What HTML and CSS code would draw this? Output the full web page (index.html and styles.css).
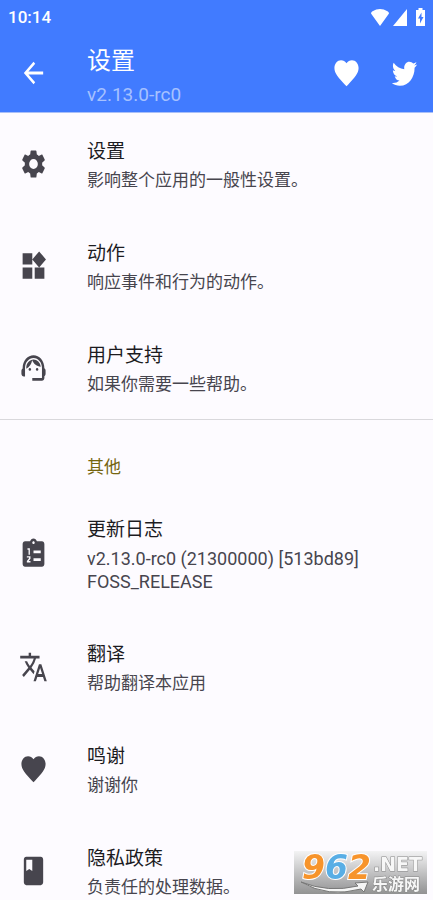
FILE: index.html
```html
<!DOCTYPE html>
<html lang="zh-CN">
<head>
<meta charset="utf-8">
<meta name="viewport" content="width=device-width, initial-scale=1">
<title>设置</title>
<link rel="stylesheet" href="styles.css">
</head>
<body>
<header class="header">
  <div class="status">
    <span>10:14</span>
    <span class="status-icons">
      <svg class="wifi" viewBox="0 0 18 17" aria-hidden="true"><path d="M9 17 0 4.500Q0 3 1.500 2.200 9-2 16.500 2.200 18 3 18 4.500Z"/></svg>
      <svg class="signal" viewBox="0 0 14 17" aria-hidden="true"><path d="M14 0v17H0z"/></svg>
      <svg class="battery" viewBox="0 0 9 18" aria-hidden="true"><path fill-rule="evenodd" d="M2.500 0h4v2H9v16H0V2h2.500zM5.500 4.500 2 10.500h2v5l3.500-6.500h-2z"/></svg>
    </span>
  </div>
  <div class="toolbar">
    <button class="icon-button" type="button" aria-label="返回"><svg class="icon" viewBox="0 0 24 24" preserveAspectRatio="none"><path d="M20 11H7.830l5.590-5.590L12 4l-8 8 8 8 1.410-1.410L7.830 13H20z"/></svg></button>
    <div class="heading">
      <h1 class="page-title">设置</h1>
      <p class="page-version">v2.13.0-rc0</p>
    </div>
    <button class="icon-button" type="button" aria-label="捐赠"><svg class="icon" viewBox="0 0 24 24" preserveAspectRatio="none"><path d="m12 21.350-1.450-1.320C5.400 15.360 2 12.280 2 8.500 2 5.420 4.420 3 7.500 3c1.740 0 3.410.81 4.500 2.090C13.090 3.810 14.760 3 16.500 3 19.580 3 22 5.420 22 8.500c0 3.780-3.400 6.860-8.550 11.540z"/></svg></button>
    <button class="icon-button" type="button" aria-label="Twitter"><svg class="icon" viewBox="0 0 24 24" preserveAspectRatio="none"><path d="M22.460 6c-.77.35-1.600.58-2.460.69.88-.53 1.560-1.370 1.880-2.380-.83.5-1.750.85-2.720 1.050C18.370 4.500 17.260 4 16 4c-2.350 0-4.270 1.920-4.270 4.290 0 .34.040.67.110.98C8.280 9.090 5.110 7.380 3 4.790c-.37.63-.58 1.370-.58 2.150 0 1.490.75 2.810 1.910 3.560-.71 0-1.370-.2-1.950-.5v.03c0 2.080 1.480 3.820 3.440 4.210a4.220 4.220 0 0 1-1.930.07 4.280 4.280 0 0 0 4 2.980 8.521 8.521 0 0 1-5.330 1.840c-.34 0-.68-.02-1.020-.06C3.440 20.290 5.700 21 8.120 21 16 21 20.330 14.460 20.330 8.790c0-.19 0-.37-.01-.56.84-.6 1.560-1.360 2.140-2.230z"/></svg></button>
  </div>
</header>
<main class="content">
  <section class="group">
    <a class="row" href="#general">
      <svg class="icon" viewBox="0 0 24 24" preserveAspectRatio="none" aria-hidden="true"><path d="M19.140 12.940c.04-.3.060-.61.060-.94 0-.32-.02-.64-.07-.94l2.030-1.580c.18-.14.23-.41.120-.61l-1.920-3.320c-.12-.22-.37-.29-.59-.22l-2.390.96c-.5-.38-1.030-.7-1.620-.94l-.36-2.540c-.04-.24-.24-.41-.48-.41h-3.840c-.24 0-.43.17-.47.41l-.36 2.540c-.59.24-1.130.57-1.620.94l-2.390-.96c-.22-.08-.47 0-.59.22L2.740 8.870c-.12.21-.08.47.120.61l2.030 1.580c-.05.3-.09.63-.09.94s.02.64.07.94l-2.030 1.580c-.18.14-.23.41-.12.61l1.920 3.320c.12.22.37.29.59.22l2.390-.96c.5.38 1.030.7 1.620.94l.36 2.540c.05.24.24.41.48.41h3.840c.24 0 .44-.17.47-.41l.36-2.540c.59-.24 1.130-.56 1.620-.94l2.390.96c.22.08.47 0 .59-.22l1.920-3.320c.12-.22.07-.47-.12-.61zM12 15.600A3.600 3.600 0 1 1 12 8.400a3.600 3.600 0 0 1 0 7.200z"/></svg>
      <div class="text"><h2 class="title">设置</h2><p class="summary">影响整个应用的一般性设置。</p></div>
    </a>
    <a class="row" href="#actions">
      <svg class="icon" viewBox="0 0 24 24" preserveAspectRatio="none" aria-hidden="true"><path d="M13 13v8h8v-8zM3 21h8v-8H3zM3 3v8h8V3zm13.660-1.310L11 7.340 16.660 13l5.660-5.660z"/></svg>
      <div class="text"><h2 class="title">动作</h2><p class="summary">响应事件和行为的动作。</p></div>
    </a>
    <a class="row" href="#support">
      <svg class="icon" viewBox="0 0 24 24" preserveAspectRatio="none" aria-hidden="true"><path d="M21 12.220C21 6.730 16.740 3 12 3c-4.690 0-9 3.650-9 9.280-.6.34-1 .98-1 1.720v2c0 1.100.9 2 2 2h1v-6.100C5 8.030 8.130 4.900 12 4.900s7 3.130 7 7V19h-8v2h8c1.100 0 2-.9 2-2v-1.220c.59-.31 1-.92 1-1.640v-2.300c0-.7-.41-1.310-1-1.620z"/><circle cx="9" cy="13" r="1"/><circle cx="15" cy="13" r="1"/><path d="M18 11.030A6.040 6.040 0 0 0 12.050 6c-3.030 0-6.290 2.510-6.030 6.450a8.075 8.075 0 0 0 4.860-5.890c1.310 2.630 4 4.440 7.120 4.470z"/></svg>
      <div class="text"><h2 class="title">用户支持</h2><p class="summary">如果你需要一些帮助。</p></div>
    </a>
  </section>
  <section class="group">
    <h2 class="category">其他</h2>
    <a class="row" href="#changelog">
      <svg class="icon" viewBox="0 0 24 24" preserveAspectRatio="none" aria-hidden="true"><path d="M19 3h-4.180C14.400 1.840 13.300 1 12 1s-2.400.84-2.820 2H5c-1.100 0-2 .9-2 2v14c0 1.100.9 2 2 2h14c1.100 0 2-.9 2-2V5c0-1.100-.9-2-2-2zm-7 0c.55 0 1 .45 1 1s-.45 1-1 1-1-.45-1-1 .45-1 1-1z"/><path class="mark" d="M7 8h2v4.500H7.900V9H7zM6.500 13.500h3v1.800L8 17h1.500v1h-3v-1l1.800-2v-.5H6.500zM12 9.500h6v2h-6zM12 15h6v2h-6z"/></svg>
      <div class="text"><h2 class="title">更新日志</h2><p class="summary latin">v2.13.0-rc0 (21300000) [513bd89]<br>FOSS_RELEASE</p></div>
    </a>
    <a class="row" href="#translate">
      <svg class="icon" viewBox="0 0 24 24" preserveAspectRatio="none" aria-hidden="true"><path d="m12.870 15.070-2.540-2.510.03-.03A17.520 17.520 0 0 0 14.070 6H17V4h-7V2H8v2H1v1.990h11.170C11.500 7.920 10.440 9.750 9 11.350 8.070 10.320 7.300 9.190 6.690 8h-2c.73 1.630 1.730 3.170 2.980 4.560l-5.090 5.020L4 19l5-5 3.110 3.110zM18.500 10h-2L12 22h2l1.120-3h4.750L21 22h2zm-2.620 7 1.620-4.330L19.120 17z"/></svg>
      <div class="text"><h2 class="title">翻译</h2><p class="summary">帮助翻译本应用</p></div>
    </a>
    <a class="row" href="#thanks">
      <svg class="icon" viewBox="0 0 24 24" preserveAspectRatio="none" aria-hidden="true"><path d="m12 21.350-1.450-1.320C5.400 15.360 2 12.280 2 8.500 2 5.420 4.420 3 7.500 3c1.740 0 3.410.81 4.500 2.090C13.090 3.810 14.760 3 16.500 3 19.580 3 22 5.420 22 8.500c0 3.780-3.400 6.860-8.550 11.540z"/></svg>
      <div class="text"><h2 class="title">鸣谢</h2><p class="summary">谢谢你</p></div>
    </a>
    <a class="row" href="#privacy">
      <svg class="icon" viewBox="0 0 24 24" preserveAspectRatio="none" aria-hidden="true"><path d="M18 2H6c-1.100 0-2 .9-2 2v16c0 1.100.9 2 2 2h12c1.100 0 2-.9 2-2V4c0-1.100-.9-2-2-2zM6 4h5v8l-2.500-1.500L6 12z"/></svg>
      <div class="text"><h2 class="title">隐私政策</h2><p class="summary">负责任的处理数据。</p></div>
    </a>
  </section>
</main>
<svg class="watermark" viewBox="0 0 133 43" role="img" aria-label="962.NET 乐游网">
  <defs><linearGradient id="shade" x2="0" y2="1"><stop offset="0" stop-color="#f3f3f4"/><stop offset="1" stop-color="#929293"/></linearGradient></defs>
  <rect width="133" height="43" fill="url(#shade)"/>
  <path class="swoosh" d="M7 31Q34 42 64 35L61 32 74 31 70 41 67 38Q34 47 7 31Z"/>
  <text class="digits" x="8" y="28"><tspan class="orange">9</tspan><tspan class="blue">6</tspan><tspan class="orange">2</tspan></text>
  <text class="domain" x="79" y="20">.NET</text>
  <text class="site" x="78" y="39">乐游网</text>
</svg>
</body>
</html>
```
FILE: styles.css
```css
* {
  box-sizing: border-box;
}

body {
  display: flex;
  flex-direction: column;
  height: 100vh;
  margin: 0;
  background: #fdfbff;
  color: #1c1b1f;
  font-family: Roboto, "Noto Sans CJK SC", sans-serif;
}

h1, h2, p {
  margin: 0;
  font-weight: 400;
}

svg {
  display: block;
  flex: none;
  fill: currentColor;
}

.header {
  flex: none;
  border-bottom: 1px solid #a9bff8;
  background: #417bff;
  color: #fff;
}

.status {
  display: flex;
  align-items: center;
  justify-content: space-between;
  height: 34px;
  padding: 0 8px;
  font-size: 17px;
  font-weight: 500;
}

.status-icons {
  display: flex;
  align-items: center;
  gap: 4px;
}

.wifi {
  width: 18px;
  height: 17px;
}

.signal {
  width: 14px;
  height: 17px;
}

.battery {
  width: 9px;
  height: 18px;
  margin-left: 5px;
}

.toolbar {
  display: flex;
  align-items: center;
  height: 78px;
  padding-left: 4px;
}

.icon-button {
  display: flex;
  align-items: center;
  justify-content: center;
  width: 58px;
  height: 58px;
  padding: 0;
  border: 0;
  background: none;
  color: inherit;
}

.icon {
  width: 29px;
  height: 34px;
}

.heading {
  flex: 1;
  padding: 8px 0 0 25px;
}

.page-title {
  font-size: 24px;
  line-height: 36px;
}

.page-version {
  color: #a6c1ff;
  font-size: 19px;
  line-height: 32px;
}

.content {
  flex: 1;
  min-height: 0;
  overflow-y: auto;
  scrollbar-width: none;
}

.group + .group {
  border-top: 1px solid #d9d8dc;
}

.row {
  display: flex;
  align-items: center;
  gap: 39px;
  padding: 23px 19px;
  color: #47454e;
  text-decoration: none;
}

.text {
  display: grid;
  gap: 4px;
  padding-top: 2px;
}

.title {
  color: #1c1b1f;
  font-size: 19px;
  line-height: 27px;
}

.summary {
  font-size: 17px;
  line-height: 23px;
}

.latin {
  font-size: 18px;
}

.mark {
  fill: #fdfbff;
}

.category {
  padding: 36px 19px 12px 87px;
  color: #756510;
  font-size: 17px;
  line-height: 23px;
}

.watermark {
  position: fixed;
  right: 6px;
  bottom: 6px;
  width: 133px;
  height: 43px;
  overflow: visible;
}

.swoosh {
  fill: #f5f5f5;
  stroke: #777;
  stroke-width: 1px;
}

.digits {
  font: italic bold 33px "DejaVu Sans", sans-serif;
  stroke: #fff;
  stroke-width: 2px;
  paint-order: stroke;
}

.orange {
  fill: #f7942b;
}

.blue {
  fill: #58aee5;
}

.domain,
.site {
  fill: #f7f7f7;
  stroke: #888;
  stroke-width: 1px;
  paint-order: stroke;
}

.domain {
  font: bold 19px "DejaVu Sans", sans-serif;
}

.site {
  font: bold 16px "Noto Sans CJK SC", sans-serif;
}
```
